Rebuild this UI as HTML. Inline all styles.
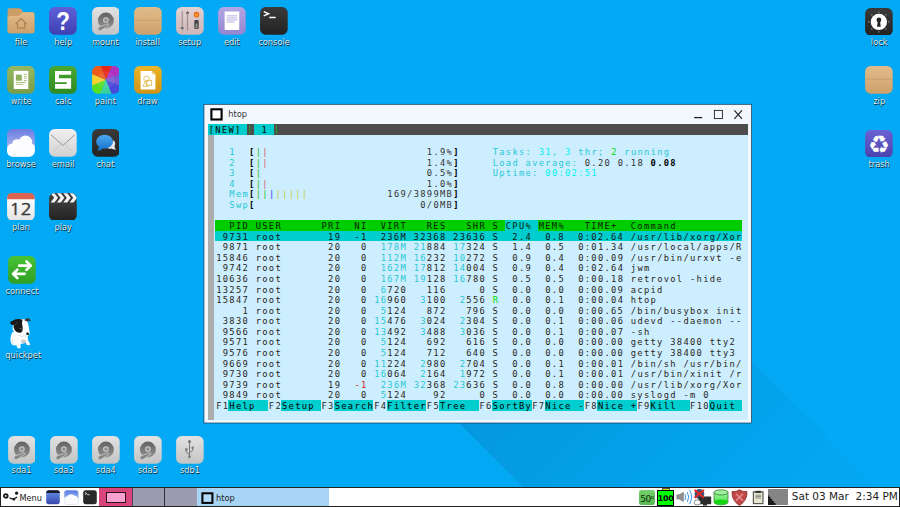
<!DOCTYPE html>
<html><head><meta charset="utf-8"><title>htop</title>
<style>
html,body{margin:0;padding:0}
body{width:900px;height:507px;overflow:hidden;position:relative;background:#03A9F4;font-family:"DejaVu Sans","Liberation Sans",sans-serif}
#shade{position:absolute;left:0;top:0;width:900px;height:507px;
 background:linear-gradient(135deg,rgba(0,45,85,0.17) 55%,rgba(0,45,85,0.115) 68%,rgba(0,45,85,0.05) 82%,rgba(0,45,85,0) 100%);
 clip-path:polygon(236px 200px,590px 200px,1000px 610px,1000px 964px)}
.ic{position:absolute;width:28px;height:28px}
.ic svg{display:block;position:absolute;left:0;top:0}
.ic span{position:absolute;left:-30.2px;width:88px;top:28.7px;text-align:center;font-size:8.3px;line-height:12px;color:rgba(255,255,255,0.9);
 text-shadow:0.7px 0.7px 0.3px rgba(0,0,0,0.75),0 0 1.2px rgba(0,0,0,0.35);white-space:nowrap}
#title{position:absolute;left:228.2px;top:107.4px;font-size:8.3px;line-height:14px;color:#333}
#tabbar{position:absolute;left:207.8px;top:124.2px;width:540.4px;height:10.7px;background:#4d4d4d;overflow:hidden}
#tabbar div{position:absolute;top:0;height:10.7px}
#tbody{position:absolute;left:207.8px;top:134.9px;width:540.4px;height:284.7px;background:#cdeeff}
#sbar{position:absolute;left:207.8px;top:134.9px;width:5.8px;height:284.7px;background:#adadad}
.bgc{position:absolute;height:10.57px}
.tr{position:absolute;left:216.20000000000002px;height:10.57px;line-height:10.57px;white-space:pre;font-family:"DejaVu Sans Mono","Liberation Mono",monospace;font-size:8.78px;letter-spacing:1.303px;color:#2a2622}
.tm{font-family:"DejaVu Sans Mono","Liberation Mono",monospace;font-size:8.78px;letter-spacing:1.303px;white-space:pre;line-height:10.7px;color:#000}
.hd{color:#0a1a00}
.hc{}
.sel{color:#08181a}
.fk{color:#000}
.cy{color:#28c8d2}
.c{color:#28c8d2}
.bc{color:#00f0f0;font-weight:normal}
.bg{color:#00e000}
.b{color:#000;font-weight:bold}
.bk{color:#000;font-weight:bold}
.dk{color:#333}
.g{color:#28c028}
.r{color:#e0506c}
.rd{color:#cd2020}
.bl{color:#2a40e8}
.y{color:#cccc30}
#bar{position:absolute;left:0;top:486.6px;width:900px;height:20.4px;background:#fff;box-sizing:border-box;border:1px solid #222;border-bottom-width:1px}
#bar div,#bar svg{position:absolute}
</style></head><body>

<svg width="0" height="0" style="position:absolute">
<defs>
<linearGradient id="gTan" x1="0" y1="0" x2="0" y2="1"><stop offset="0" stop-color="#e0bc8a"/><stop offset="1" stop-color="#cfa06a"/></linearGradient>
<linearGradient id="gHelp" x1="0" y1="0" x2="0" y2="1"><stop offset="0" stop-color="#5f5fd8"/><stop offset="1" stop-color="#4040b4"/></linearGradient>
<linearGradient id="gGrey" x1="0" y1="0" x2="0" y2="1"><stop offset="0" stop-color="#e2e2e2"/><stop offset="1" stop-color="#c4c4c4"/></linearGradient>
<linearGradient id="gSetup" x1="0" y1="0" x2="0" y2="1"><stop offset="0" stop-color="#e4d2d2"/><stop offset="1" stop-color="#cdb6b8"/></linearGradient>
<linearGradient id="gEdit" x1="0" y1="0" x2="0" y2="1"><stop offset="0" stop-color="#b3a6e4"/><stop offset="1" stop-color="#9385cf"/></linearGradient>
<linearGradient id="gDark" x1="0" y1="0" x2="0" y2="1"><stop offset="0" stop-color="#3a3a3a"/><stop offset="1" stop-color="#222"/></linearGradient>
<linearGradient id="gWrite" x1="0" y1="0" x2="0" y2="1"><stop offset="0" stop-color="#96b862"/><stop offset="1" stop-color="#789c48"/></linearGradient>
<linearGradient id="gCalc" x1="0" y1="0" x2="0" y2="1"><stop offset="0" stop-color="#48a830"/><stop offset="1" stop-color="#2f8a20"/></linearGradient>
<linearGradient id="gDraw" x1="0" y1="0" x2="0" y2="1"><stop offset="0" stop-color="#ecb428"/><stop offset="1" stop-color="#cf9414"/></linearGradient>
<linearGradient id="gBrowse" x1="0" y1="0" x2="0" y2="1"><stop offset="0" stop-color="#6c7ce0"/><stop offset="0.7" stop-color="#a8b8f0"/><stop offset="1" stop-color="#e8eefc"/></linearGradient>
<linearGradient id="gMail" x1="0" y1="0" x2="0" y2="1"><stop offset="0" stop-color="#f0f0f0"/><stop offset="1" stop-color="#d0d0d0"/></linearGradient>
<linearGradient id="gConn" x1="0" y1="0" x2="0" y2="1"><stop offset="0" stop-color="#48c234"/><stop offset="1" stop-color="#2f9f24"/></linearGradient>
<linearGradient id="gTrash" x1="0" y1="0" x2="0" y2="1"><stop offset="0" stop-color="#6a62d4"/><stop offset="1" stop-color="#4a42ac"/></linearGradient>
<linearGradient id="gDisc" x1="0" y1="0" x2="0" y2="1"><stop offset="0" stop-color="#626262"/><stop offset="1" stop-color="#929292"/></linearGradient>
<g id="disc">
 <circle cx="14" cy="13.6" r="8" fill="url(#gDisc)"/>
 <circle cx="14" cy="13.2" r="2.9" fill="#c2c2c2"/>
 <circle cx="14" cy="13.2" r="1.6" fill="#8c8c8c"/>
 <path d="M6.2 22.6 Q5.4 20.8 7.4 20 L16.4 16.8 L17 18.2 L9.8 23.2 Q7.2 24.6 6.2 22.6Z" fill="#858585" stroke="#d2d2d2" stroke-width="0.7"/>
</g>
</defs></svg>

<div id="shade"></div>
<div class="ic" style="left:7.25px;top:7.35px"><svg width="27.8" height="27.8" viewBox="0 0 28 28"><path d="M0.6 3.2 Q0.6 1.2 2.6 1.2 L12 1.2 Q13.4 1.2 14.4 2.4 L16.6 5.2 L25.6 5.2 Q27.6 5.2 27.6 7.2 L27.6 24.4 Q27.6 26.4 25.6 26.4 L2.6 26.4 Q0.6 26.4 0.6 24.4Z" fill="#cd9e68"/>
<path d="M0.6 10.6 Q0.6 9 2.4 9 L10.6 9 Q12.2 9 13.4 7.6 L14.6 6.4 Q15.6 5.4 17.2 5.4 L25.6 5.4 Q27.6 5.4 27.6 7.4 L27.6 24.4 Q27.6 26.4 25.6 26.4 L2.6 26.4 Q0.6 26.4 0.6 24.4Z" fill="url(#gTan)"/>
<path d="M8.8 17 L14.2 11.6 L19.6 17 M10.5 16 L10.5 21.2 L17.9 21.2 L17.9 16" fill="none" stroke="#ac8454" stroke-width="1.3" stroke-linejoin="round" stroke-linecap="round"/></svg><span>file</span></div>
<div class="ic" style="left:49.42px;top:7.35px"><svg width="27.8" height="27.8" viewBox="0 0 28 28"><rect x="0.1" y="0.1" width="27.8" height="27.8" rx="5.5" fill="url(#gHelp)"/><text transform="translate(14.2 23.4) scale(0.88 1)" text-anchor="middle" font-family="Liberation Sans, DejaVu Sans, sans-serif" font-weight="bold" font-size="25.6" fill="#fff">?</text></svg><span>help</span></div>
<div class="ic" style="left:91.59px;top:7.35px"><svg width="27.8" height="27.8" viewBox="0 0 28 28"><rect x="0.1" y="0.1" width="27.8" height="27.8" rx="5.5" fill="url(#gGrey)"/><use href="#disc"/></svg><span>mount</span></div>
<div class="ic" style="left:133.76px;top:7.35px"><svg width="27.8" height="27.8" viewBox="0 0 28 28"><rect x="0.1" y="0.1" width="27.8" height="27.8" rx="5.5" fill="url(#gTan)"/><rect x="0.1" y="13" width="27.8" height="0.7" fill="#b48a58"/><rect x="0.1" y="13.7" width="27.8" height="0.5" fill="#e8c898" opacity="0.6"/></svg><span>install</span></div>
<div class="ic" style="left:175.93px;top:7.35px"><svg width="27.8" height="27.8" viewBox="0 0 28 28"><rect x="0.1" y="0.1" width="27.8" height="27.8" rx="5.5" fill="url(#gSetup)"/><g stroke="#807676" stroke-width="0.7"><path d="M6.3 4V23.6M11.6 4V23.6"/><path d="M5 6h2.6M5 9h2.6M5 12h2.6M5 15h2.6M5 18h2.6M10.3 9h2.6M10.3 12h2.6M10.3 15h2.6M10.3 18h2.6M10.3 21h2.6" stroke-width="0.3" opacity="0.6"/></g>
<path d="M4.7 20.2h3.2v1.2l-1.6 1.2l-1.6-1.2Z" fill="#6a6a6a"/><path d="M10 5.4h3.2v1.4h-3.2Z M10.6 5.4l1-1.2l1 1.2Z" fill="#6a6a6a"/>
<circle cx="20.7" cy="7.7" r="2.8" fill="#e86a14"/><circle cx="20.7" cy="7.9" r="1.7" fill="#ff9a30"/>
<rect x="18.4" y="13" width="4.5" height="9.2" rx="1.1" fill="#484848"/><rect x="19.5" y="16.8" width="2.3" height="4.6" fill="#8a8a8a"/></svg><span>setup</span></div>
<div class="ic" style="left:218.10px;top:7.35px"><svg width="27.8" height="27.8" viewBox="0 0 28 28"><rect x="0.1" y="0.1" width="27.8" height="27.8" rx="5.5" fill="url(#gEdit)"/><rect x="6.7" y="4.5" width="14.7" height="18.6" fill="#fff"/><g stroke="#aea5da" stroke-width="0.9"><path d="M8.7 8.9h10.6M8.7 11h10.6M8.7 13h10.6M8.7 15.1h7.8"/></g></svg><span>edit</span></div>
<div class="ic" style="left:260.27px;top:7.35px"><svg width="27.8" height="27.8" viewBox="0 0 28 28"><rect x="0.1" y="0.1" width="27.8" height="27.8" rx="5.5" fill="url(#gDark)"/><path d="M3.8 4.6 L8.6 6.8 L3.8 9" fill="none" stroke="#fff" stroke-width="1.5"/><rect x="9.4" y="9.8" width="6.4" height="1.5" fill="#fff"/></svg><span>console</span></div>
<div class="ic" style="left:7.25px;top:66.00px"><svg width="27.8" height="27.8" viewBox="0 0 28 28"><rect x="0.1" y="0.1" width="27.8" height="27.8" rx="5.5" fill="url(#gWrite)"/><rect x="6.8" y="4.9" width="14.7" height="18.3" fill="#fff"/><rect x="8.9" y="8.7" width="6" height="6.1" fill="#8fae5c"/><g stroke="#9ab86c" stroke-width="0.9"><path d="M16.9 8.3h2.9M16.9 10.4h2.9M16.9 12.4h2.9M16.9 14.6h2.9M8.9 16.6h10M8.9 18.5h7.7"/></g></svg><span>write</span></div>
<div class="ic" style="left:49.42px;top:66.00px"><svg width="27.8" height="27.8" viewBox="0 0 28 28"><rect x="0.1" y="0.1" width="27.8" height="27.8" rx="5.5" fill="url(#gCalc)"/><path d="M6.1 5.1H22.3V8.8H10V12.4H22.3V22.8H6.1V18.1H17.8V16.4H6.1Z" fill="#fff"/></svg><span>calc</span></div>
<div class="ic" style="left:91.59px;top:66.00px"><svg width="27.8" height="27.8" viewBox="0 0 28 28"><clipPath id="cpP"><rect x="0.1" y="0.1" width="27.8" height="27.8" rx="5.5"/></clipPath><g clip-path="url(#cpP)"><path d="M14 14L5.01 -8.25L23.76 -7.93Z" fill="#e82818"/><path d="M14 14L23.38 -8.09L36.41 5.40Z" fill="#b030c0"/><path d="M14 14L36.25 5.01L35.93 23.76Z" fill="#7a58d0"/><path d="M14 14L36.09 23.38L22.60 36.41Z" fill="#4a48d8"/><path d="M14 14L22.99 36.25L4.24 35.93Z" fill="#38d0a0"/><path d="M14 14L4.62 36.09L-8.41 22.60Z" fill="#58e020"/><path d="M14 14L-8.25 22.99L-7.93 4.24Z" fill="#f8d028"/><path d="M14 14L-8.09 4.62L5.40 -8.41Z" fill="#f05a18"/><circle cx="14" cy="14" r="9" fill="#fff" opacity="0.08"/></g></svg><span>paint</span></div>
<div class="ic" style="left:133.76px;top:66.00px"><svg width="27.8" height="27.8" viewBox="0 0 28 28"><rect x="0.1" y="0.1" width="27.8" height="27.8" rx="5.5" fill="url(#gDraw)"/><path d="M6.6 5h11.4l3.6 3.6V23.6H6.6Z" fill="#fff"/><path d="M18 5l3.6 3.6h-3.6Z" fill="#ecd08c"/><g fill="none" stroke="#dcb448" stroke-width="0.8"><circle cx="12.6" cy="13" r="2.8"/><rect x="12.4" y="14.4" width="5.4" height="5" /><path d="M9 20.4l2.6-5 2.6 5Z"/></g></svg><span>draw</span></div>
<div class="ic" style="left:7.25px;top:129.40px"><svg width="27.8" height="27.8" viewBox="0 0 28 28"><rect x="0.1" y="0.1" width="27.8" height="27.8" rx="5.5" fill="url(#gBrowse)"/><clipPath id="cpB"><rect x="0.1" y="0.1" width="27.8" height="27.8" rx="5.5"/></clipPath><g clip-path="url(#cpB)" fill="#fdfdff"><circle cx="5" cy="19.4" r="4.6"/><circle cx="10" cy="15" r="4.8"/><circle cx="18.6" cy="13.2" r="6.7"/><circle cx="24.6" cy="19.6" r="4.4"/><rect x="0" y="19" width="28" height="9"/><rect x="5" y="15" width="20" height="6"/></g></svg><span>browse</span></div>
<div class="ic" style="left:49.42px;top:129.40px"><svg width="27.8" height="27.8" viewBox="0 0 28 28"><rect x="0.1" y="0.1" width="27.8" height="27.8" rx="5.5" fill="url(#gMail)"/><path d="M2 5.8 L14 16.6 L26 5.8" fill="none" stroke="#8c8c8c" stroke-width="0.9"/><path d="M5.4 22.4 L11.6 15 M22.6 22.4 L16.4 15" fill="none" stroke="#bcbcbc" stroke-width="0.6"/></svg><span>email</span></div>
<div class="ic" style="left:91.59px;top:129.40px"><svg width="27.8" height="27.8" viewBox="0 0 28 28"><rect x="0.1" y="0.1" width="27.8" height="27.8" rx="5.5" fill="url(#gDark)"/><path d="M21.6 11.4 Q24.6 14 22.6 17.4 Q23 19.6 24.4 20.6 Q21.4 21 19.6 19.6 Q16 20.4 14 18.4Z" fill="#e8e8e8"/><linearGradient id="gCh" x1="0" y1="0" x2="0" y2="1"><stop offset="0" stop-color="#4ca8f0"/><stop offset="1" stop-color="#1c78d0"/></linearGradient><ellipse cx="12.7" cy="12.8" rx="8.5" ry="7" fill="url(#gCh)"/><path d="M7 17.4 Q7.2 20 5.4 21.8 Q9.4 21.8 11.6 19.2Z" fill="#1c7ad2"/></svg><span>chat</span></div>
<div class="ic" style="left:7.25px;top:192.70px"><svg width="27.8" height="27.8" viewBox="0 0 28 28"><linearGradient id="gPlan" x1="0" y1="0" x2="0" y2="1"><stop offset="0.3" stop-color="#fafafa"/><stop offset="1" stop-color="#e2e2e2"/></linearGradient><rect x="0.1" y="0.1" width="27.8" height="27.8" rx="5.5" fill="url(#gPlan)"/><path d="M0.1 6.2V5.6Q0.1 0.1 5.6 0.1H22.4Q27.9 0.1 27.9 5.6V6.2Z" fill="#de6452"/><text transform="translate(2.3 22) scale(1.12 1)" font-family="NanumGothic, Liberation Sans, sans-serif" font-size="16.8" fill="#383838" stroke="#383838" stroke-width="0.45">12</text></svg><span>plan</span></div>
<div class="ic" style="left:49.42px;top:192.70px"><svg width="27.8" height="27.8" viewBox="0 0 28 28"><clipPath id="cpPl"><rect x="0.1" y="0.1" width="27.8" height="27.8" rx="5.5"/></clipPath><g clip-path="url(#cpPl)"><rect x="0" y="0" width="28" height="28" fill="#3c3c3c"/><rect x="0" y="9.6" width="28" height="18.4" fill="url(#gDark)"/>
<g fill="#f4f4f4"><path d="M1.6 0.2h3.9l3.6 4.7-3.6 4.7H1.6l3.6-4.7Z"/><path d="M8 0.2h3.9l3.6 4.7-3.6 4.7H8l3.6-4.7Z"/><path d="M14.4 0.2h3.9l3.6 4.7-3.6 4.7H14.4l3.6-4.7Z"/><path d="M20.8 0.2h3.9l3.6 4.7-3.6 4.7H20.8l3.6-4.7Z"/></g></g></svg><span>play</span></div>
<div class="ic" style="left:8.14px;top:256.40px"><svg width="27.8" height="27.8" viewBox="0 0 28 28"><rect x="0.1" y="0.1" width="27.8" height="27.8" rx="5.5" fill="url(#gConn)"/><g fill="none" stroke="#fff" stroke-width="2.6" stroke-linecap="round" stroke-linejoin="round"><path d="M11.2 9.7H22.4M18.6 5.5l4.4 4.2L18.6 13.9"/><path d="M16.8 18H5.6M9.4 13.8l-4.4 4.2L9.4 22.2"/></g></svg><span>connect</span></div>
<div class="ic" style="left:7.25px;top:318.40px"><svg width="36" height="38" viewBox="0 0 36 38" style="position:absolute;left:-3.2px;top:-4.4px">
<path d="M8.4 18 Q5.4 24 7 29 Q7.6 31.4 10 31.6 L12.4 31 L13 33.6 Q14.6 35 16.6 34 L16.6 30 Q19.4 30 21.6 28.6 L22.8 30.8 Q24.8 31.8 26.3 30.4 L24 26 Q24.6 22 22.4 19Z" fill="#fcfcfc"/>
<ellipse cx="19.6" cy="27.4" rx="2.6" ry="2" fill="#b8b8b8" opacity="0.7"/>
<path d="M8.4 25 Q8 28 9.6 30.6" fill="none" stroke="#cfcfcf" stroke-width="0.7"/>
<path d="M9 8 Q12 4.4 18 5 Q23 5 24.2 10 L25.6 18 Q26.2 21 23 22.2 Q19 23.6 15 22 Q10 20 8.6 15Z" fill="#fff"/>
<path d="M14 21 Q18 23 22 21.8" fill="none" stroke="#ccc" stroke-width="0.6"/>
<path d="M8.4 7 Q11 4.6 15 5 L18.6 5.6 Q17.4 9 18.6 13 Q19.2 17 17 18.6 Q13 19.6 10.6 16 Q9 13 9.6 11 Q7 11.6 6.2 9 Q6 7 8.4 7Z" fill="#181818"/>
<path d="M9.8 11 Q12.4 11 13.6 8.4" fill="none" stroke="#666" stroke-width="0.5"/>
<path d="M20.4 6.2 Q22.4 3.6 25 4.4 Q26.6 5.4 27 7.4 Q25 6 23 7.4Z" fill="#3a3434"/>
<path d="M15.6 14.4 L17.8 15" stroke="#999" stroke-width="0.6"/>
<ellipse cx="23.6" cy="19.7" rx="1.4" ry="1.2" fill="#0a0a0a"/>
</svg><span style="margin-left:2.2px;margin-top:1.5px">quickpet</span></div>
<div class="ic" style="left:7.60px;top:436.20px"><svg width="27.8" height="27.8" viewBox="0 0 28 28"><rect x="0.1" y="0.1" width="27.8" height="27.8" rx="5.5" fill="url(#gGrey)"/><use href="#disc"/></svg><span style="margin-left:0.2px;margin-top:-0.8px">sda1</span></div>
<div class="ic" style="left:49.72px;top:436.20px"><svg width="27.8" height="27.8" viewBox="0 0 28 28"><rect x="0.1" y="0.1" width="27.8" height="27.8" rx="5.5" fill="url(#gGrey)"/><use href="#disc"/></svg><span style="margin-left:0.2px;margin-top:-0.8px">sda3</span></div>
<div class="ic" style="left:91.84px;top:436.20px"><svg width="27.8" height="27.8" viewBox="0 0 28 28"><rect x="0.1" y="0.1" width="27.8" height="27.8" rx="5.5" fill="url(#gGrey)"/><use href="#disc"/></svg><span style="margin-left:0.2px;margin-top:-0.8px">sda4</span></div>
<div class="ic" style="left:133.96px;top:436.20px"><svg width="27.8" height="27.8" viewBox="0 0 28 28"><rect x="0.1" y="0.1" width="27.8" height="27.8" rx="5.5" fill="url(#gGrey)"/><use href="#disc"/></svg><span style="margin-left:0.2px;margin-top:-0.8px">sda5</span></div>
<div class="ic" style="left:176.08px;top:436.20px"><svg width="27.8" height="27.8" viewBox="0 0 28 28"><rect x="0.1" y="0.1" width="27.8" height="27.8" rx="5.5" fill="url(#gGrey)"/><g fill="none" stroke="#777" stroke-width="1"><path d="M13.6 6V21"/><path d="M13.6 19L10.4 16.4V14.6"/><path d="M13.6 17L16.8 14.6V12.6"/></g><circle cx="13.6" cy="5.6" r="1.6" fill="#777"/><rect x="9.2" y="12.4" width="2.4" height="2.4" fill="#777"/><circle cx="16.8" cy="11.8" r="1.3" fill="#777"/><path d="M12 20h3.2L13.6 23.2Z" fill="#777"/></svg><span style="margin-left:0.2px;margin-top:-0.8px">sdb1</span></div>
<div class="ic" style="left:865.40px;top:7.50px"><svg width="27.8" height="27.8" viewBox="0 0 28 28"><rect x="0.1" y="0.1" width="27.8" height="27.8" rx="5.5" fill="url(#gDark)"/><circle cx="14" cy="14" r="8.2" fill="#fff"/><circle cx="14" cy="12" r="2.4" fill="#222"/><path d="M13 12.6h2l0.9 6.4h-3.8Z" fill="#222"/><g fill="#bbb"><circle cx="14" cy="4" r="0.6"/><circle cx="14" cy="24" r="0.6"/><circle cx="4" cy="14" r="0.6"/><circle cx="24" cy="14" r="0.6"/><circle cx="6.9" cy="6.9" r="0.6"/><circle cx="21.1" cy="6.9" r="0.6"/><circle cx="6.9" cy="21.1" r="0.6"/><circle cx="21.1" cy="21.1" r="0.6"/></g></svg><span>lock</span></div>
<div class="ic" style="left:865.40px;top:65.90px"><svg width="27.8" height="27.8" viewBox="0 0 28 28"><rect x="0.1" y="0.1" width="27.8" height="27.8" rx="5.5" fill="url(#gTan)"/><rect x="0.1" y="13" width="27.8" height="0.7" fill="#b48a58"/><rect x="0.1" y="13.7" width="27.8" height="0.5" fill="#e8c898" opacity="0.6"/></svg><span>zip</span></div>
<div class="ic" style="left:865.40px;top:129.50px"><svg width="27.8" height="27.8" viewBox="0 0 28 28"><rect x="0.1" y="0.1" width="27.8" height="27.8" rx="5.5" fill="url(#gTrash)"/><text x="14" y="23" text-anchor="middle" font-family="DejaVu Sans, sans-serif" font-size="24.6" fill="#fff">&#x267B;</text></svg><span>trash</span></div>
<svg style="position:absolute;left:200px;top:100px" width="560" height="330" viewBox="200 100 560 330"><rect x="203.95" y="104.3" width="547.65" height="318.7" fill="#f3f8ff" stroke="#16324e" stroke-width="0.7"/></svg>
<svg style="position:absolute;left:210.1px;top:108.3px" width="13" height="13" viewBox="0 0 13 13"><rect x="1.4" y="1.3" width="10.2" height="10.2" fill="#fff" stroke="#000" stroke-width="2.1"/></svg><div id="title">htop</div>
<svg style="position:absolute;left:690px;top:106px" width="58" height="17" viewBox="0 0 58 17">
<path d="M4.2 11.6H12.2" stroke="#222" stroke-width="1.3" fill="none"/>
<rect x="24.4" y="4.4" width="8" height="8.2" stroke="#222" stroke-width="0.9" fill="none"/>
<path d="M44.4 4.4L52 12.8M52 4.4L44.4 12.8" stroke="#222" stroke-width="1.2" fill="none"/>
</svg>
<div id="tbody"></div><div id="sbar"></div>
<div id="tabbar">
 <div style="left:0;width:39.5px;background:#00cdcd"></div><div class="tm" style="left:0.9px;top:0.6px">[NEW]</div>
 <div class="tm" style="left:39.5px;color:#20b020">|</div>
 <div style="left:46.1px;width:19.8px;background:#00cdcd"></div><div class="tm" style="left:47px;top:0.6px"> 1</div>
 <div class="tm" style="left:65.9px;color:#20b020">|</div>
</div>
<div class="bgc" style="left:215.30px;top:220.30px;width:527.12px;background:#00cd00"></div>
<div class="bgc" style="left:505.22px;top:220.30px;width:32.95px;background:#00cdcd"></div>
<div class="bgc" style="left:215.30px;top:230.87px;width:527.12px;background:#00cdcd"></div>
<div class="bgc" style="left:228.48px;top:399.99px;width:39.53px;background:#00cdcd"></div>
<div class="bgc" style="left:281.19px;top:399.99px;width:39.53px;background:#00cdcd"></div>
<div class="bgc" style="left:333.90px;top:399.99px;width:39.53px;background:#00cdcd"></div>
<div class="bgc" style="left:386.61px;top:399.99px;width:39.53px;background:#00cdcd"></div>
<div class="bgc" style="left:439.33px;top:399.99px;width:39.53px;background:#00cdcd"></div>
<div class="bgc" style="left:492.04px;top:399.99px;width:39.53px;background:#00cdcd"></div>
<div class="bgc" style="left:544.75px;top:399.99px;width:39.53px;background:#00cdcd"></div>
<div class="bgc" style="left:597.46px;top:399.99px;width:39.53px;background:#00cdcd"></div>
<div class="bgc" style="left:650.17px;top:399.99px;width:39.53px;background:#00cdcd"></div>
<div class="bgc" style="left:709.48px;top:399.99px;width:32.95px;background:#00cdcd"></div>
<div class="tr " style="top:147.21px">  <span class="cy">1  </span><span class="b">[</span><span class="g">|</span><span class="r">|</span>                        <span class="dk">1.9%</span><span class="b">]</span>     <span class="cy">Tasks: </span><span class="bc">31</span><span class="cy">, </span><span class="bc">3</span><span class="cy"> thr; </span><span class="bg">2</span><span class="cy"> running</span></div>
<div class="tr " style="top:157.78px">  <span class="cy">2  </span><span class="b">[</span><span class="g">|</span><span class="r">|</span>                        <span class="dk">1.4%</span><span class="b">]</span>     <span class="cy">Load average: </span><span class="dk">0.20 0.18 </span><span class="bk">0.08</span></div>
<div class="tr " style="top:168.35px">  <span class="cy">3  </span><span class="b">[</span><span class="g">|</span>                         <span class="dk">0.5%</span><span class="b">]</span>     <span class="cy">Uptime: </span><span class="bc">00:02:51</span></div>
<div class="tr " style="top:178.92px">  <span class="cy">4  </span><span class="b">[</span><span class="g">|</span><span class="r">|</span>                        <span class="dk">1.0%</span><span class="b">]</span></div>
<div class="tr " style="top:189.49px">  <span class="cy">Mem</span><span class="b">[</span><span class="g">||</span><span class="bl">|</span><span class="y">|||||</span>            <span class="dk">169/3899MB</span><span class="b">]</span></div>
<div class="tr " style="top:200.06px">  <span class="cy">Swp</span><span class="b">[</span>                         <span class="dk">0/0MB</span><span class="b">]</span></div>
<div class="tr hd" style="top:221.20px">  PID USER      PRI  NI  VIRT   RES   SHR S <span class="hc">CPU% </span>MEM%   TIME+  Command          </div>
<div class="tr sel" style="top:231.77px"> 9731 root       19  -1  236M 32368 23636 S  2.4  0.8  0:02.64 /usr/lib/xorg/Xor</div>
<div class="tr " style="top:242.34px"> 9871 root       20   0  <span class="c">178M</span> <span class="c">21</span>884 <span class="c">17</span>324 S  1.4  0.5  0:01.34 /usr/local/apps/R</div>
<div class="tr " style="top:252.91px">15846 root       20   0  <span class="c">112M</span> <span class="c">16</span>232 <span class="c">10</span>272 S  0.9  0.4  0:00.09 /usr/bin/urxvt -e</div>
<div class="tr " style="top:263.48px"> 9742 root       20   0  <span class="c">162M</span> <span class="c">17</span>812 <span class="c">14</span>004 S  0.9  0.4  0:02.64 jwm</div>
<div class="tr " style="top:274.05px">10636 root       20   0  <span class="c">167M</span> <span class="c">19</span>128 <span class="c">16</span>780 S  0.5  0.5  0:00.18 retrovol -hide</div>
<div class="tr " style="top:284.62px">13257 root       20   0  <span class="c">6</span>720   116     0 S  0.0  0.0  0:00.09 acpid</div>
<div class="tr " style="top:295.19px">15847 root       20   0 <span class="c">16</span>960  <span class="c">3</span>100  <span class="c">2</span>556 <span class="bg">R</span>  0.0  0.1  0:00.04 htop</div>
<div class="tr " style="top:305.76px">    1 root       20   0  <span class="c">5</span>124   872   796 S  0.0  0.0  0:00.65 /bin/busybox init</div>
<div class="tr " style="top:316.33px"> 3830 root       20   0 <span class="c">15</span>476  <span class="c">3</span>024  <span class="c">2</span>304 S  0.0  0.1  0:00.06 udevd --daemon --</div>
<div class="tr " style="top:326.90px"> 9566 root       20   0 <span class="c">13</span>492  <span class="c">3</span>488  <span class="c">3</span>036 S  0.0  0.1  0:00.07 -sh</div>
<div class="tr " style="top:337.47px"> 9571 root       20   0  <span class="c">5</span>124   692   616 S  0.0  0.0  0:00.00 getty 38400 tty2</div>
<div class="tr " style="top:348.04px"> 9576 root       20   0  <span class="c">5</span>124   712   640 S  0.0  0.0  0:00.00 getty 38400 tty3</div>
<div class="tr " style="top:358.61px"> 9669 root       20   0 <span class="c">11</span>224  <span class="c">2</span>980  <span class="c">2</span>704 S  0.0  0.1  0:00.01 /bin/sh /usr/bin/</div>
<div class="tr " style="top:369.18px"> 9730 root       20   0 <span class="c">16</span>064  <span class="c">2</span>164  <span class="c">1</span>972 S  0.0  0.1  0:00.01 /usr/bin/xinit /r</div>
<div class="tr " style="top:379.75px"> 9739 root       19 <span class="rd"> -1</span>  <span class="c">236M</span> <span class="c">32</span>368 <span class="c">23</span>636 S  0.0  0.8  0:00.00 /usr/lib/xorg/Xor</div>
<div class="tr " style="top:390.32px"> 9849 root       20   0  <span class="c">5</span>124    92     0 S  0.0  0.0  0:00.00 syslogd -m 0</div>
<div class="tr " style="top:400.89px">F1<span class="fk">Help  </span>F2<span class="fk">Setup </span>F3<span class="fk">Search</span>F4<span class="fk">Filter</span>F5<span class="fk">Tree  </span>F6<span class="fk">SortBy</span>F7<span class="fk">Nice -</span>F8<span class="fk">Nice +</span>F9<span class="fk">Kill  </span>F10<span class="fk">Quit </span></div>
<div id="bar">

<svg style="left:1.5px;top:2.6px" width="17" height="14" viewBox="0 0 17 14">
 <circle cx="2.8" cy="5.9" r="1.8" fill="#fff" stroke="#1a1a1a" stroke-width="1.9"/>
 <circle cx="13.6" cy="3.2" r="1.6" fill="#1a1a1a"/>
 <path d="M6.6 7.7 Q10.2 10.4 14 7" fill="none" stroke="#1a1a1a" stroke-width="1.2"/>
 <path d="M8.8 8.8 L12.6 8.9 L11 10.9Z" fill="#1a1a1a"/>
</svg>
<div style="left:18.4px;top:4.1px;font-size:8.2px;line-height:13px;color:#222">Menu</div>
<svg style="left:45.3px;top:2.8px" width="14" height="14.4" viewBox="0 0 14 14.4"><linearGradient id="gWn" x1="0" y1="0" x2="0" y2="1"><stop offset="0.2" stop-color="#5c84dc"/><stop offset="1" stop-color="#3846ae"/></linearGradient><rect x="0.2" y="0.2" width="13.6" height="14" rx="2.6" fill="url(#gWn)"/><path d="M0.2 3V2.8Q0.2 0.2 2.8 0.2H11.2Q13.8 0.2 13.8 2.8V3Z" fill="#1c1c28"/></svg>
<svg style="left:63.3px;top:2.8px" width="14.6" height="14.4" viewBox="0 0 14.6 14.4"><linearGradient id="gCl" x1="0" y1="0" x2="0" y2="1"><stop offset="0" stop-color="#4f78e6"/><stop offset="0.7" stop-color="#a8c0f6"/></linearGradient><rect x="0.2" y="0.2" width="14.2" height="14" rx="2.8" fill="url(#gCl)" stroke="#c8c8d0" stroke-width="0.4"/><path d="M0.2 11.4V8.6Q1 6.4 3.2 6.6Q4 4.4 6.6 4.6Q9 3.6 10.4 5.8Q12.6 5.6 13.2 7.2Q14.4 7.6 14.4 9V11.4Q14.4 14.2 11.6 14.2H3Q0.2 14.2 0.2 11.4Z" fill="#fbfbff"/></svg>
<svg style="left:82px;top:2.8px" width="14" height="14.4" viewBox="0 0 14 14.4"><rect x="0.2" y="0.2" width="13.6" height="14" rx="2.6" fill="#2a2a2a"/><path d="M2 2.6L3.8 3.5L2 4.4" stroke="#fff" stroke-width="0.8" fill="none"/><rect x="4.2" y="4.4" width="2.4" height="0.8" fill="#fff"/></svg>
<div style="left:98px;top:0;width:32.6px;height:18.4px;background:#d8457c"></div>
<div style="left:105px;top:4.8px;width:18.2px;height:8.8px;background:#f8a0d0;border:0.9px solid #30101c"></div>
<div style="left:130.6px;top:0;width:65.4px;height:18.4px;background:#9c9cb0"></div>
<div style="left:163.2px;top:0;width:0.9px;height:18.4px;background:#30303c"></div>
<div style="left:130.6px;top:0;width:0.7px;height:18.4px;background:#50405c"></div>
<div style="left:196px;top:0;width:132px;height:18.4px;background:#a8d4f6"></div>
<svg style="left:199.6px;top:4.2px" width="13" height="13" viewBox="0 0 13 13"><rect x="1.4" y="1.3" width="10" height="9.6" fill="#b4dafa" stroke="#000" stroke-width="2"/></svg>
<div style="left:215px;top:4.1px;font-size:8.2px;line-height:13px;color:#222">htop</div>
<!-- tray -->
<div style="left:637.9px;top:2.6px;width:16.2px;height:15.2px;border-radius:2.2px;background:linear-gradient(#74d06c,#58b850);font-size:9px;line-height:15.4px;text-align:center;color:#0c2c0c;letter-spacing:-0.4px">50<span style="font-size:5.5px;vertical-align:3px">o</span></div>
<div style="left:660.6px;top:0.2px;width:8px;height:3px;background:#e8e000;border:0.5px solid #555;box-sizing:border-box"></div>
<div style="left:655.8px;top:2.6px;width:17.6px;height:16px;box-sizing:border-box;background:#00ff00;border:0.8px solid #000;font-size:7.8px;font-weight:bold;line-height:15px;text-align:center;color:#000;letter-spacing:-0.2px">100</div>
<svg style="left:674.5px;top:1.6px" width="18" height="17" viewBox="0 0 18 17"><path d="M0.8 5.8H3.2L7.4 3.2V12.6L3.2 10H0.8Z" fill="#909090" stroke="#6a6a6a" stroke-width="0.5"/><g fill="none" stroke="#3c98f0" stroke-width="1"><path d="M8.8 5Q10.6 8 8.8 11"/><path d="M11.2 3Q14.2 8 11.2 13"/><path d="M13.6 1Q17.6 8 13.6 15"/></g></svg>
<svg style="left:692.4px;top:1.2px" width="19" height="17.6" viewBox="0 0 19 17.6"><circle cx="6.4" cy="5" r="4.9" fill="#36587a"/><rect x="5.6" y="7.6" width="12.6" height="7.6" rx="0.8" fill="#2c2c2c"/><rect x="10" y="15" width="4" height="1.6" fill="#2c2c2c"/><ellipse cx="4.4" cy="13.4" rx="3.2" ry="2.6" fill="#fff" stroke="#444" stroke-width="0.6"/><path d="M1.6 1L11 8.8M11 1L1.6 8.8" stroke="#e62424" stroke-width="2"/></svg>
<svg style="left:712.4px;top:1.8px" width="16" height="16.6" viewBox="0 0 16 16.6"><linearGradient id="gCy" x1="0" y1="0" x2="0" y2="1"><stop offset="0" stop-color="#98f498"/><stop offset="1" stop-color="#48e448"/></linearGradient><path d="M1 3.4V13.2A7 2.6 0 0 0 15 13.2V3.4Z" fill="url(#gCy)" stroke="#2a6a2a" stroke-width="0.7"/><path d="M1.4 12.6A6.6 2.2 0 0 1 14.6 12.6V13.2A6.6 2.6 0 0 1 1.4 13.2Z" fill="#14d414"/><ellipse cx="8" cy="3.4" rx="7" ry="2.6" fill="#9cf09c" stroke="#2a6a2a" stroke-width="0.7"/></svg>
<svg style="left:730.4px;top:1.4px" width="17" height="17.4" viewBox="0 0 17 17.4"><path d="M8.5 0.8Q5 3 1 2.6Q0.4 11.4 8.5 16.6Q16.6 11.4 16 2.6Q12 3 8.5 0.8Z" fill="#c04848" stroke="#7c2020" stroke-width="0.7"/><path d="M5 4.8L12 11.8M12 4.8L5 11.8" stroke="#e89090" stroke-width="1.5"/></svg>
<svg style="left:750.6px;top:2.2px" width="13" height="15.6" viewBox="0 0 13 15.6"><rect x="0.8" y="1.2" width="10.8" height="13" fill="#5a5a5a"/><rect x="2" y="2.6" width="8.4" height="10.4" fill="#e8e8d2"/><rect x="3.6" y="0.8" width="5.2" height="2.2" fill="#333"/><path d="M3.4 5.2h5.6M3.4 6.6h5.6M3.4 8h5.6" stroke="#666" stroke-width="0.7"/></svg>
<div style="left:766.8px;top:1.8px;width:19.8px;height:16px;background:#858585"></div>
<svg style="left:766.8px;top:1.8px" width="20" height="16" viewBox="0 0 20 16"><path d="M0 6.4L1.2 6.4L1.2 8L2.6 8L2.6 10L4.2 10L4.2 12L6 12L6 14L7.6 14L7.6 16L0 16Z" fill="#1c1c1c"/></svg>
<div style="left:790.8px;top:1.9px;font-size:10.5px;line-height:14px;color:#222;white-space:pre">Sat 03 Mar  2:34 PM</div>

</div>
</body></html>
